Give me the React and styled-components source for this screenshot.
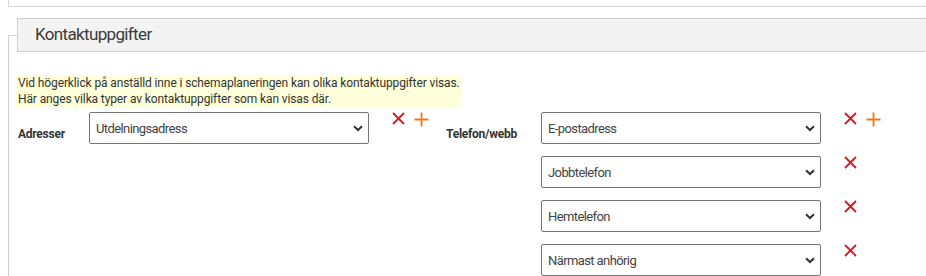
import styled, { createGlobalStyle } from 'styled-components';

const GlobalStyle = createGlobalStyle`
  html, body {
    overflow: hidden;
  }
  body {
    margin: 0 0 0 8px;
    background: #fff;
    font-family: Roboto, "Liberation Sans", sans-serif;
    color: #333;
  }
`;

// Bottom edge of the panel scrolled above
const TopPanel = styled.div`
  width: 1000px;
  height: 6px;
  border: 1px solid #d6d6d6;
  border-top: none;
`;

const Section = styled.fieldset`
  width: 1000px;
  margin: 11px 0 0;
  padding: 0 0 0 9px;
  border: none;
  border-left: 1px solid #cfcfcf;
  border-top: 1px solid #cfcfcf;
  min-width: 0;
`;

const Legend = styled.legend`
  box-sizing: border-box;
  width: 1000px;
  height: 34px;
  margin-left: -1px;
  padding: 0 0 0 17px;
  background: #f3f3f3;
  border: 1px solid #cfcfcf;
  font-size: 17px;
  line-height: 31px;
  color: #3a3a3a;
  letter-spacing: -0.65px;
`;

const Info = styled.div`
  width: fit-content;
  margin: 23px 0 0 -2px;
  padding: 0 2px;
  background: #ffffd9;
  font-size: 12px;
  line-height: 16px;
  letter-spacing: -0.12px;
  color: #333;
`;

const Form = styled.div`
  display: flex;
  margin-top: 5px;
`;

const Group = styled.div`
  display: grid;
  grid-template-columns: ${(p) => p.$labelWidth}px 280px ${(p) => p.$iconsWidth}px;
  row-gap: 12px;
  align-items: start;
`;

const Label = styled.div`
  grid-row: 1;
  padding-top: 15px;
  font-size: 12px;
  line-height: 14px;
  font-weight: bold;
  letter-spacing: -0.25px;
  color: #333;
`;

const SelectWrap = styled.div`
  grid-column: 2;
  position: relative;
  height: 32px;
`;

const Select = styled.select`
  box-sizing: border-box;
  width: 100%;
  height: 32px;
  appearance: none;
  border: 1px solid #767676;
  border-radius: 2px;
  background: #fff;
  padding: 0 20px 0 6px;
  font-family: Roboto, "Liberation Sans", sans-serif;
  font-size: 13px;
  letter-spacing: -0.6px;
  color: #444;
  outline: none;
`;

const Chevron = styled.svg`
  position: absolute;
  right: 6px;
  top: 13px;
  pointer-events: none;
`;

const Icons = styled.div`
  grid-column: 3;
  display: flex;
  align-items: flex-start;
  gap: 9px;
  padding: 0 0 0 23px;
`;

const IconButton = styled.button`
  display: flex;
  padding: 0;
  border: none;
  background: none;
  cursor: pointer;
`;

const RemoveIcon = () => (
  <IconButton title="Ta bort">
    <svg width="13" height="13" viewBox="0 0 13 13">
      <path d="M1 1 L12 12 M12 1 L1 12" stroke="#e3141b" strokeWidth="1.8" fill="none" />
    </svg>
  </IconButton>
);

const AddIcon = () => (
  <IconButton title="Lägg till">
    <svg width="15" height="15" viewBox="0 0 15 15">
      <path d="M7.5 0.5 V14.5 M0.5 7.5 H14.5" stroke="#ec7a22" strokeWidth="1.8" fill="none" />
    </svg>
  </IconButton>
);

const Dropdown = ({ value }) => (
  <SelectWrap>
    <Select defaultValue={value}>
      <option>{value}</option>
    </Select>
    <Chevron width="10" height="7" viewBox="0 0 10 7">
      <path d="M1 1.2 L5 5 L9 1.2" stroke="#333" strokeWidth="2" fill="none" />
    </Chevron>
  </SelectWrap>
);

const addresses = ['Utdelningsadress'];
const phones = ['E-postadress', 'Jobbtelefon', 'Hemtelefon', 'Närmast anhörig'];

function FieldGroup({ label, items, labelWidth, iconsWidth }) {
  return (
    <Group $labelWidth={labelWidth} $iconsWidth={iconsWidth}>
      <Label>{label}</Label>
      {items.map((item, i) => [
        <Dropdown key={`s${i}`} value={item} />,
        <Icons key={`i${i}`}>
          <RemoveIcon />
          {i === 0 && <AddIcon />}
        </Icons>,
      ])}
    </Group>
  );
}

export default function App() {
  return (
    <>
      <GlobalStyle />
      <TopPanel />
      <Section>
        <Legend>Kontaktuppgifter</Legend>
        <Info>
          Vid högerklick på anställd inne i schemaplaneringen kan olika kontaktuppgifter visas.
          <br />
          Här anges vilka typer av kontaktuppgifter som kan visas där.
        </Info>
        <Form>
          <FieldGroup label="Adresser" items={addresses} labelWidth={71} iconsWidth={77} />
          <FieldGroup label="Telefon/webb" items={phones} labelWidth={95} iconsWidth={80} />
        </Form>
      </Section>
    </>
  );
}
